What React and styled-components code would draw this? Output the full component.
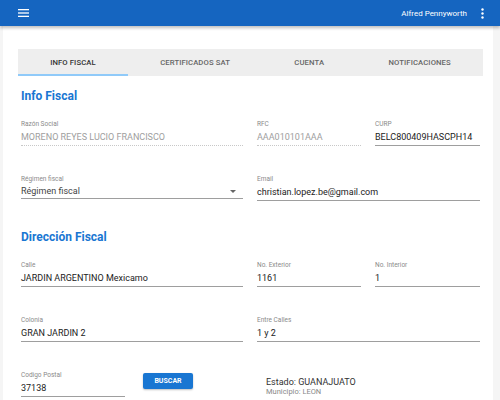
import React from 'react';
import styled, { createGlobalStyle, css } from 'styled-components';

const GlobalStyle = createGlobalStyle`
  html, body {
    margin: 0;
    padding: 0;
    background: #f5f5f5;
    font-family: Roboto, "Liberation Sans", Arial, sans-serif;
  }
  * { box-sizing: border-box; }
`;

const tabs = ['INFO FISCAL', 'CERTIFICADOS SAT', 'CUENTA', 'NOTIFICACIONES'];

export default function App() {
  return (
    <>
      <GlobalStyle />
      <AppBar>
        <IconButton aria-label="menu">
          <svg width="11" height="8" viewBox="0 0 11 8">
            <rect x="0" y="0" width="11" height="1.3" fill="#fff" />
            <rect x="0" y="3.35" width="11" height="1.3" fill="#fff" />
            <rect x="0" y="6.7" width="11" height="1.3" fill="#fff" />
          </svg>
        </IconButton>
        <Spacer />
        <UserName>Alfred Pennyworth</UserName>
        <IconButton aria-label="more">
          <svg width="3" height="11" viewBox="0 0 3 11">
            <circle cx="1.5" cy="1.5" r="1.2" fill="#fff" />
            <circle cx="1.5" cy="5.5" r="1.2" fill="#fff" />
            <circle cx="1.5" cy="9.5" r="1.2" fill="#fff" />
          </svg>
        </IconButton>
      </AppBar>

      <Paper>
        <TabBar>
          {tabs.map((t, i) => (
            <Tab key={t} active={i === 0}>{t}</Tab>
          ))}
        </TabBar>

        <Content>
          <Heading>Info Fiscal</Heading>
          <FieldGrid>
            <Field>
              <Label>Razón Social</Label>
              <Value disabled>MORENO REYES LUCIO FRANCISCO</Value>
            </Field>
            <Field>
              <Label>RFC</Label>
              <Value disabled>AAA010101AAA</Value>
            </Field>
            <Field>
              <Label>CURP</Label>
              <Value>BELC800409HASCPH14</Value>
            </Field>

            <Field>
              <Label>Régimen fiscal</Label>
              <Value select>
                Régimen fiscal
                <Arrow />
              </Value>
            </Field>
            <Field wide>
              <Label>Email</Label>
              <Value>christian.lopez.be@gmail.com</Value>
            </Field>
          </FieldGrid>

          <Heading spaced>Dirección Fiscal</Heading>
          <FieldGrid>
            <Field>
              <Label>Calle</Label>
              <Value>JARDIN ARGENTINO Mexicamo</Value>
            </Field>
            <Field>
              <Label>No. Exterior</Label>
              <Value>1161</Value>
            </Field>
            <Field>
              <Label>No. Interior</Label>
              <Value>1</Value>
            </Field>

            <Field>
              <Label>Colonia</Label>
              <Value>GRAN JARDIN 2</Value>
            </Field>
            <Field wide>
              <Label>Entre Calles</Label>
              <Value>1 y 2</Value>
            </Field>

            <PostalRow>
              <Field>
                <Label>Codigo Postal</Label>
                <Value>37138</Value>
              </Field>
              <SearchButton>BUSCAR</SearchButton>
            </PostalRow>
            <Location>
              <State>Estado: GUANAJUATO</State>
              <Town>Municipio: LEON</Town>
            </Location>
          </FieldGrid>
        </Content>
      </Paper>
    </>
  );
}

const AppBar = styled.header`
  position: relative;
  z-index: 2;
  height: 26px;
  background: #1565c0;
  display: flex;
  align-items: center;
  padding: 0 16px 0 18px;
  box-shadow: 0 2px 3px rgba(0, 0, 0, 0.25);
`;

const IconButton = styled.span`
  display: flex;
  align-items: center;
  justify-content: center;
`;

const Spacer = styled.div`
  flex: 1;
`;

const UserName = styled.span`
  color: #fff;
  font-size: 8px;
  margin-right: 14px;
`;

const Paper = styled.main`
  margin: 0 7px 0 3px;
  background: #fff;
  padding: 23px 10px 0 15px;
  min-height: 374px;
`;

const TabBar = styled.nav`
  display: flex;
  background: #eeeeee;
  height: 27px;
`;

const Tab = styled.div`
  flex: 1 1 auto;
  display: flex;
  align-items: center;
  justify-content: center;
  font-size: 7.7px;
  font-weight: 500;
  letter-spacing: 0.1px;
  color: #666;
  border-bottom: 2px solid transparent;
  padding-top: 1px;
  white-space: nowrap;

  ${(p) =>
    p.active &&
    css`
      color: #333;
      border-bottom-color: #90caf9;
    `}
`;

const Content = styled.section`
  padding-left: 3px;
`;

const Heading = styled.h2`
  margin: ${(p) => (p.spaced ? '28px' : '12px')} 0 15px;
  font-size: 12px;
  line-height: 16px;
  font-weight: 700;
  color: #1976d2;
`;

const FieldGrid = styled.div`
  display: grid;
  grid-template-columns: 222px 104px 105px;
  column-gap: 14px;
  row-gap: 28px;
  align-items: start;
`;

const Field = styled.div`
  display: flex;
  flex-direction: column;
  ${(p) =>
    p.wide &&
    css`
      grid-column: span 2;
    `}
`;

const Label = styled.label`
  font-size: 6.5px;
  line-height: 10px;
  color: #8a8a8a;
`;

const Value = styled.div`
  position: relative;
  margin-top: 1px;
  font-size: 9px;
  line-height: 14px;
  color: #222;
  padding-bottom: 1px;
  border-bottom: 1px solid #9e9e9e;
  white-space: nowrap;

  ${(p) =>
    p.disabled &&
    css`
      color: #9e9e9e;
      border-bottom: 1px dotted #c8c8c8;
    `}

  ${(p) =>
    p.select &&
    css`
      line-height: 12px;
      color: #444;
    `}
`;

const Arrow = styled.span`
  position: absolute;
  right: 7px;
  top: 5px;
  width: 0;
  height: 0;
  border-left: 3px solid transparent;
  border-right: 3px solid transparent;
  border-top: 3px solid #666;
`;

const PostalRow = styled.div`
  display: grid;
  grid-template-columns: 104px 50px;
  column-gap: 18px;
  align-items: start;
`;

const SearchButton = styled.button`
  margin-top: 3px;
  height: 16px;
  border: 0;
  border-radius: 2px;
  background: #1976d2;
  color: #fff;
  font-family: Roboto, "Liberation Sans", Arial, sans-serif;
  font-size: 7px;
  font-weight: 700;
  padding: 0;
  box-shadow: 0 1px 2px rgba(0, 0, 0, 0.25);
`;

const Location = styled.div`
  grid-column: span 2;
  padding: 6px 0 0 9px;
  display: flex;
  flex-direction: column;
`;

const State = styled.div`
  font-size: 9px;
  line-height: 12px;
  color: #333;
`;

const Town = styled.div`
  font-size: 7.5px;
  line-height: 8px;
  color: #888;
`;
